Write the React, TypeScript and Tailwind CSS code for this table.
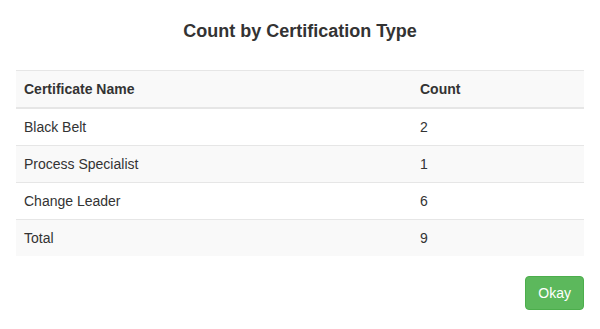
const rows: { name: string; count: number }[] = [
  { name: "Black Belt", count: 2 },
  { name: "Process Specialist", count: 1 },
  { name: "Change Leader", count: 6 },
  { name: "Total", count: 9 },
];

export default function App() {
  return (
    <div
      className="w-[600px] h-[329px] bg-white text-[#333] px-4"
      style={{ fontFamily: '"Liberation Sans", Arial, Helvetica, sans-serif' }}
    >
      <h4 className="pt-[21px] text-center text-[18px] font-bold leading-[20px]">
        Count by Certification Type
      </h4>
      <table className="mt-[29px] w-full border-collapse text-[14px] leading-[20px]">
        <thead>
          <tr className="bg-[#f9f9f9]">
            <th className="border-t border-b-2 border-[#e6e6e6] px-2 py-2 text-left font-bold w-[396px]">
              Certificate Name
            </th>
            <th className="border-t border-b-2 border-[#e6e6e6] px-2 py-2 text-left font-bold">
              Count
            </th>
          </tr>
        </thead>
        <tbody>
          {rows.map((r, i) => (
            <tr key={r.name} className={i % 2 === 1 ? "bg-[#f9f9f9]" : "bg-white"}>
              <td className={`${i === 0 ? "" : "border-t"} border-[#e6e6e6] px-2 py-2`}>{r.name}</td>
              <td className={`${i === 0 ? "" : "border-t"} border-[#e6e6e6] px-2 py-2`}>{r.count}</td>
            </tr>
          ))}
        </tbody>
      </table>
      <div className="mt-5 flex justify-end">
        <button className="h-[34px] rounded-[4px] border border-[#4cae4c] bg-[#5cb85c] px-3 text-[14px] leading-[20px] text-white">
          Okay
        </button>
      </div>
    </div>
  );
}
